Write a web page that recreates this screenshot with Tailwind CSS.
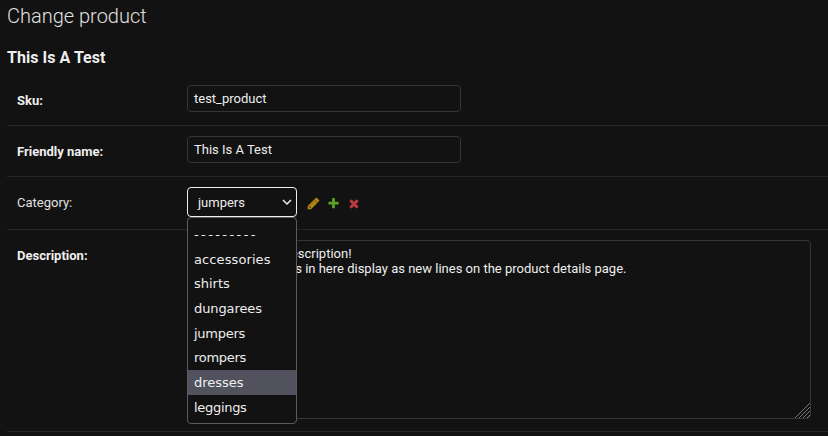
<!DOCTYPE html>
<html lang="en">
<head>
<meta charset="utf-8">
<title>Change product</title>
<script src="https://cdn.jsdelivr.net/npm/@tailwindcss/browser@4"></script>
</head>
<body class="bg-[#121212] text-[#eeeeee] font-[Roboto,sans-serif] text-[13px] w-[828px] h-[436px] overflow-hidden">
<main class="pl-[7px]">
  <h1 class="h-[46px] pt-[4px] text-[20px] leading-[24px] font-light text-[#e0e0e0]">Change product</h1>
  <h2 class="h-[29px] pt-px text-[16px] leading-[22px] font-bold tracking-[0.04px]">This Is A Test</h2>
  <div class="flex h-[51px] border-b border-[#272727] pl-[10px] pt-[10px]">
    <label class="w-[170px] pt-[8px] leading-[15px] font-bold">Sku:</label>
    <div class="w-[274px] h-[27px] border border-[#353535] rounded-[4px] px-[6px] leading-[25px]">test_product</div>
  </div>
  <div class="flex h-[51px] border-b border-[#272727] pl-[10px] pt-[10px]">
    <label class="w-[170px] pt-[8px] leading-[15px] font-bold">Friendly name:</label>
    <div class="w-[274px] h-[27px] border border-[#353535] rounded-[4px] px-[6px] leading-[25px]">This Is A Test</div>
  </div>
  <div class="flex h-[53px] border-b border-[#272727] pl-[10px] pt-[10px]">
    <label class="w-[170px] pt-[8px] leading-[15px] text-[#e0e0e0]">Category:</label>
    <div class="relative w-[110px] h-[30px] border border-[#eeeeee] rounded-[4px] pl-[10px] pr-[4px] flex items-center justify-between">
      <span class="pt-px">jumpers</span>
      <svg class="w-[10px] h-[8px]" viewBox="0 0 10 8" fill="none" stroke="#eeeeee" stroke-width="1.5"><path d="M1 2l4 4 4-4"/></svg>
      <ul class="absolute z-10 -left-px top-[29px] w-[110px] h-[207px] bg-[#121212] border border-[#5b5b66] rounded-[4px] pt-[4px] font-['DejaVu_Sans',sans-serif] text-[13px] leading-[26.2px]">
        <li class="h-[24.67px] pl-[6px] leading-[25px] tracking-[2.4px]">---------</li>
        <li class="h-[24.67px] pl-[6px] tracking-[0.1px]">accessories</li>
        <li class="h-[24.67px] pl-[6px]">shirts</li>
        <li class="h-[24.67px] pl-[6px] tracking-[-0.1px]">dungarees</li>
        <li class="h-[24.67px] pl-[6px] tracking-[-0.25px]">jumpers</li>
        <li class="h-[24.67px] pl-[6px] tracking-[-0.3px]">rompers</li>
        <li class="h-[24.67px] pl-[6px] bg-[#52525e]">dresses</li>
        <li class="h-[24.67px] pl-[6px] tracking-[-0.3px]">leggings</li>
      </ul>
    </div>
    <div class="flex pl-[10px] pt-[10px] gap-[7px]">
      <svg class="w-[13px] h-[13px]" viewBox="0 0 1792 1792" fill="#b78b10" stroke="#b78b10" stroke-width="70"><path d="M491 1536l91-91-235-235-91 91v107h128v128h107zm523-928q0-22-22-22-10 0-17 7l-542 542q-7 7-7 17 0 22 22 22 10 0 17-7l542-542q7-7 7-17zm-54-192l416 416-832 832h-416v-416zm683 96q0 53-37 90l-166 166-416-416 166-165q36-38 90-38 53 0 91 38l235 234q37 39 37 91z"/></svg>
      <svg class="w-[13px] h-[13px]" viewBox="0 0 1792 1792" fill="#5fa225"><path d="M1600 736v192q0 40-28 68t-68 28h-416v416q0 40-28 68t-68 28h-192q-40 0-68-28t-28-68v-416h-416q-40 0-68-28t-28-68v-192q0-40 28-68t68-28h416v-416q0-40 28-68t68-28h192q40 0 68 28t28 68v416h416q40 0 68 28t28 68z"/></svg>
      <svg class="w-[14px] h-[13px]" viewBox="0 0 1792 1792" fill="#b9393c" stroke="#b9393c" stroke-width="50"><path d="M1490 1322q0 40-28 68l-136 136q-28 28-68 28t-68-28l-294-294-294 294q-28 28-68 28t-68-28l-136-136q-28-28-28-68t28-68l294-294-294-294q-28-28-28-68t28-68l136-136q28-28 68-28t68 28l294 294 294-294q28-28 68-28t68 28l136 136q28 28 28 68t-28 68l-294 294 294 294q28 28 28 68z"/></svg>
    </div>
  </div>
  <div class="flex h-[202px] border-b border-[#272727] pl-[10px] pt-[10px]">
    <label class="w-[170px] pt-[8px] leading-[15px] font-bold">Description:</label>
    <div class="relative w-[624px] h-[179px] border border-[#353535] rounded-[4px] pt-[5px] leading-[15px] whitespace-nowrap">
      <p class="w-[163.5px] text-right">escription!</p>
      <p class="w-[438.5px] text-right">s in here display as new lines on the product details page.</p>
      <svg class="absolute right-0 bottom-0 w-[15px] h-[15px]" viewBox="0 0 15 15" stroke="#777777" stroke-width="1"><path d="M0 15L15 0M4 15L15 4M8 15L15 8M12 15L15 12"/></svg>
    </div>
  </div>
</main>
</body>
</html>
